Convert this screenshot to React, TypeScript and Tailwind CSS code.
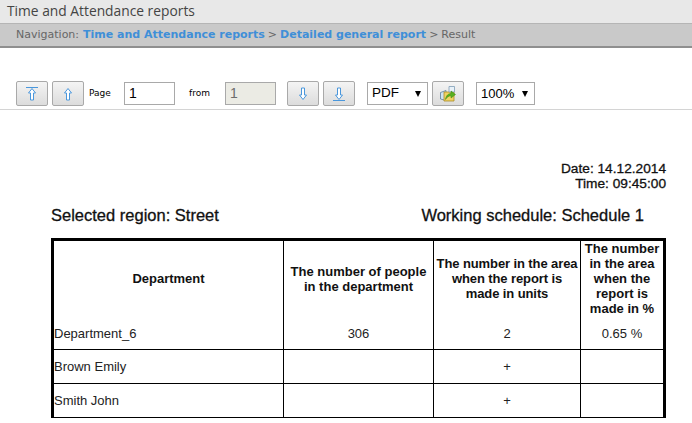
import React from "react";

const btn = "w-[32px] h-[25px] flex items-center justify-center rounded-[2px] border border-[#a9a9a9] bg-gradient-to-b from-[#f4f4f4] to-[#dcdcdc]";

function Arrow({ dir, bar }: { dir: "up" | "down"; bar?: boolean }) {
  return (
    <svg width="14" height="16" viewBox="0 0 14 16" className={dir === "down" ? "rotate-180" : ""}>
      {bar && <path d="M1 1.5H13" stroke="#4a97dc" strokeWidth="1" fill="none" />}
      <path d="M7 2.5L3.5 7H5.5V14H8.5V7H10.5Z" fill="#ffffff" stroke="#4a97dc" strokeWidth="1" />
    </svg>
  );
}

function Caret() {
  return <span className="w-0 h-0 border-l-[3.5px] border-r-[3.5px] border-t-[6px] border-l-transparent border-r-transparent border-t-black" />;
}

const cell = "border-r border-b border-black p-0 align-middle text-center";
const head = "border-r border-black text-center align-middle pb-[2px]";

export default function App() {
  return (
    <div className="w-[692px] h-[423px] overflow-hidden bg-white font-['Liberation_Sans',Arial,sans-serif] text-black">
      <div className="h-[23px] bg-[#e8e8e8] pl-[7px] flex items-center text-[13.8px] text-[#444] font-['Open_Sans',sans-serif]">
        Time and Attendance reports
      </div>
      <div className="h-[25px] bg-[#c9c9c9] border-t border-t-[#b5b5b5] border-b-2 border-b-[#8f8f8f] pl-[16px] flex items-center gap-[3px] text-[11px] font-['DejaVu_Sans',sans-serif] text-[#666] whitespace-nowrap">
        <span>Navigation:</span>
        <span className="font-bold text-[#3f8fd8] ml-[1px]">Time and Attendance reports</span>
        <span>&gt;</span>
        <span className="font-bold text-[#3f8fd8]">Detailed general report</span>
        <span>&gt;</span>
        <span>Result</span>
      </div>

      <div className="mt-[33px] ml-[16px] h-[25px] flex items-center">
        <div className={btn}><Arrow dir="up" bar /></div>
        <div className={`${btn} ml-[4px]`}><Arrow dir="up" /></div>
        <span className="ml-[5px] w-[35px] text-[9px] font-['DejaVu_Sans',sans-serif]">Page</span>
        <div className="w-[51px] h-[23px] border border-[#a9a9a9] pl-[4px] flex items-center text-[14px]">1</div>
        <span className="ml-[14px] w-[36px] text-[9px] font-['DejaVu_Sans',sans-serif]">from</span>
        <div className="w-[51px] h-[23px] border border-[#a9a9a9] bg-[#ebebe4] pl-[4px] flex items-center text-[14px] text-[#6d6d6d]">1</div>
        <div className={`${btn} ml-[11px]`}><Arrow dir="down" /></div>
        <div className={`${btn} ml-[4px]`}><Arrow dir="down" bar /></div>
        <div className="ml-[12px] w-[61px] h-[23px] border border-[#a9a9a9] flex items-center justify-between pl-[4px] pr-[6px] text-[13.5px]">
          <span>PDF</span><Caret />
        </div>
        <div className={`${btn} ml-[4px]`}>
          <svg width="18" height="18" viewBox="0 0 18 18">
            <path d="M1.5 7.5L7 5.5V15.5L1.5 14Z" fill="#cfe3f2" stroke="#5d7f99" strokeWidth="0.8" />
            <path d="M5 7H15V16H5Z" fill="#f0d264" stroke="#a98a25" strokeWidth="0.8" />
            <path d="M10 1.5H15.5V7H10Z" fill="#e8f1f8" stroke="#7f9db5" strokeWidth="0.8" />
            <path d="M6.5 14.5C7 10.5 9.5 8.5 12 8.5V6L16.5 9.5L12 13V10.8C10 10.8 8 12 6.5 14.5Z" fill="#58b020" stroke="#3c8a10" strokeWidth="0.5" />
          </svg>
        </div>
        <div className="ml-[12px] w-[59px] h-[23px] border border-[#a9a9a9] flex items-center justify-between pl-[4px] pr-[6px] text-[13px]">
          <span>100%</span><Caret />
        </div>
      </div>
      <div className="mt-[3px] h-px bg-[#d4d4d4]" />

      <div className="pl-[51px] w-[666px]">
        <div className="mt-[51px] text-right text-[13.7px] leading-[15px] text-[#111] [-webkit-text-stroke:0.3px_#111]">
          <div>Date: 14.12.2014</div>
          <div>Time: 09:45:00</div>
        </div>
        <div className="mt-[12px] h-[24px] flex items-center justify-between pr-[22px] text-[16.5px] text-[#111] [-webkit-text-stroke:0.3px_#111]">
          <span>Selected region: Street</span>
          <span>Working schedule: Schedule 1</span>
        </div>
        <table className="mt-[11px] w-[615px] table-fixed border-separate border-spacing-0 border-t-[3px] border-l-[3px] border-r-[3px] border-black text-[13px] leading-[15px] text-[#222]">
          <colgroup>
            <col className="w-[230px]" />
            <col className="w-[150px]" />
            <col className="w-[147px]" />
            <col className="w-[82px]" />
          </colgroup>
          <tbody>
            <tr className="h-[77px] font-bold text-[#111]">
              <td className={head}>Department</td>
              <td className={head}>The number of people<br />in the department</td>
              <td className={`${head} whitespace-nowrap tracking-[-0.1px]`}>The number in the area<br />when the report is<br />made in units</td>
              <td className="text-center align-middle pb-[2px]">The number<br />in the area<br />when the<br />report is<br />made in %</td>
            </tr>
            <tr className="h-[32px]">
              <td className={`${cell} text-left`}>Department_6</td>
              <td className={cell}>306</td>
              <td className={cell}>2</td>
              <td className="border-b border-black text-center align-middle">0.65 %</td>
            </tr>
            <tr className="h-[34px]">
              <td className={`${cell} text-left`}>Brown Emily</td>
              <td className={cell} />
              <td className={cell}>+</td>
              <td className="border-b border-black" />
            </tr>
            <tr className="h-[34px]">
              <td className={`${cell} text-left`}>Smith John</td>
              <td className={cell} />
              <td className={cell}>+</td>
              <td className="border-b border-black" />
            </tr>
          </tbody>
        </table>
      </div>
    </div>
  );
}
